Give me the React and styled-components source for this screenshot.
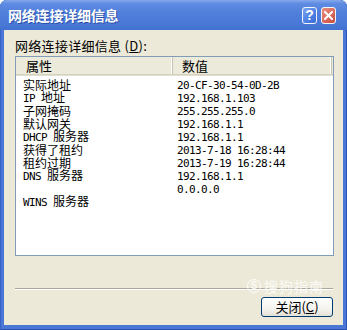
import React from 'react';
import styled, { createGlobalStyle } from 'styled-components';

const GlobalStyle = createGlobalStyle`
  html, body {
    margin: 0;
    padding: 0;
    background: #ffffff;
  }
  body {
    font-family: "Noto Sans CJK SC", "Liberation Sans", sans-serif;
  }
`;

const Window = styled.div`
  position: relative;
  width: 347px;
  height: 330px;
  box-sizing: border-box;
  display: flex;
  flex-direction: column;
  border-radius: 7px 7px 0 0;
  background: #4a76d6;
  padding: 0 4px 5px 4px;
  box-shadow: inset 1px 0 0 #3661c6, inset -1px 0 0 #2c55b8, inset 0 -1px 0 #2a50b0;
  overflow: hidden;
`;

const TitleBar = styled.div`
  height: 30px;
  margin: 0 -4px;
  padding: 0 11px 0 8px;
  display: flex;
  align-items: center;
  border-radius: 7px 7px 0 0;
  background: linear-gradient(
    to bottom,
    #86a9ec 0%,
    #5f8ce2 12%,
    #4f7edb 45%,
    #4a78d7 80%,
    #4270d0 100%
  );
`;

const Title = styled.div`
  flex: 1;
  color: #ffffff;
  font-size: 14px;
  font-weight: 700;
  letter-spacing: -0.2px;
  text-shadow: 1px 1px 0 #2a4fa8;
`;

const Caption = styled.div`
  display: flex;
  gap: 4px;
`;

const CaptionButton = styled.div`
  width: 15px;
  height: 17px;
  box-sizing: border-box;
  border: 1px solid #f4f6fc;
  border-radius: 3px;
  display: flex;
  align-items: center;
  justify-content: center;
  color: #ffffff;
  font-family: "Liberation Sans", sans-serif;
  font-weight: 700;
  font-size: 14px;
  background: ${(p) =>
    p.$close
      ? 'linear-gradient(135deg, #e99080 0%, #d9685a 55%, #c8503f 100%)'
      : 'linear-gradient(135deg, #7ea6f0 0%, #4f82e3 55%, #3a6bd8 100%)'};
`;

const Client = styled.div`
  flex: 1;
  background: #ece9d8;
  display: flex;
  flex-direction: column;
  padding: 9px 9px 8px 11px;
`;

const Label = styled.div`
  font-size: 13px;
  line-height: 14px;
  color: #000;
  margin-bottom: 3px;
  letter-spacing: 0.3px;

  & u {
    text-decoration: underline;
  }
`;

const ListBox = styled.div`
  height: 200px;
  box-sizing: border-box;
  border: 1px solid #7f9db9;
  background: #ffffff;
  display: flex;
  flex-direction: column;
`;

const Header = styled.div`
  display: flex;
  height: 17px;
  background: #ebeadb;
  border-bottom: 1px solid #d6d2c2;
  box-shadow: 0 1px 0 #e2decd;
`;

const HeaderCell = styled.div`
  width: ${(p) => p.$w}px;
  box-sizing: border-box;
  padding-left: ${(p) => p.$pad}px;
  font-size: 13px;
  line-height: 17px;
  color: #000;
  border-right: 1px solid #c7c5b2;
  box-shadow: inset -1px 0 0 #ffffff;
`;

const Rows = styled.div`
  padding-top: 3px;
  display: flex;
  flex-direction: column;
`;

const Row = styled.div`
  display: flex;
  height: 13px;
  align-items: center;
`;

const Cell = styled.div`
  width: ${(p) => p.$w}px;
  box-sizing: border-box;
  padding-left: ${(p) => p.$pad}px;
  font-size: 12px;
  line-height: 13px;
  color: #000;
  white-space: nowrap;
`;

const Latin = styled.span`
  font-family: "DejaVu Sans Mono", "Liberation Mono", monospace;
  font-size: 11px;
  letter-spacing: -0.62px;
  white-space: pre;
`;

const Spacer = styled.div`
  flex: 1;
`;

const Separator = styled.div`
  height: 1px;
  margin-right: 1px;
  background: #aca899;
  border-bottom: 1px solid #ffffff;
`;

const Footer = styled.div`
  display: flex;
  justify-content: flex-end;
  padding-top: 7px;
  padding-right: 1px;
`;

const Button = styled.button`
  position: relative;
  z-index: 1;
  width: 72px;
  height: 20px;
  padding: 0;
  border: 1px solid #003c74;
  border-radius: 3px;
  background: linear-gradient(to bottom, #ffffff 0%, #f4f3ee 60%, #e3e1d6 100%);
  font-family: "Noto Sans CJK SC", sans-serif;
  font-size: 13px;
  line-height: 18px;
  color: #000;
`;

const Watermark = styled.div`
  position: absolute;
  left: 247px;
  top: 278px;
  display: flex;
  align-items: center;
  gap: 3px;
  color: rgba(255, 255, 255, 0.8);
  font-size: 14px;
  line-height: 16px;
  letter-spacing: 1px;
  pointer-events: none;
`;

const Badge = styled.span`
  width: 14px;
  height: 14px;
  box-sizing: border-box;
  border-radius: 50%;
  border: 1.5px solid rgba(255, 255, 255, 0.85);
  display: flex;
  align-items: center;
  justify-content: center;
  font-family: "Liberation Sans", sans-serif;
  font-weight: 700;
  font-size: 10px;
  letter-spacing: 0;
`;

const rows = [
  ['实际地址', '20-CF-30-54-0D-2B'],
  ['IP 地址', '192.168.1.103'],
  ['子网掩码', '255.255.255.0'],
  ['默认网关', '192.168.1.1'],
  ['DHCP 服务器', '192.168.1.1'],
  ['获得了租约', '2013-7-18 16:28:44'],
  ['租约过期', '2013-7-19 16:28:44'],
  ['DNS 服务器', '192.168.1.1'],
  ['', '0.0.0.0'],
  ['WINS 服务器', ''],
];

// ascii runs get the narrow half-width font, CJK stays full width
const mixed = (text) =>
  text.split(/([\x20-\x7e]+)/).filter(Boolean).map((part, i) =>
    /^[\x20-\x7e]+$/.test(part) ? <Latin key={i}>{part}</Latin> : <span key={i}>{part}</span>
  );

export default function App() {
  return (
    <>
      <GlobalStyle />
      <Window>
        <TitleBar>
          <Title>网络连接详细信息</Title>
          <Caption>
            <CaptionButton>?</CaptionButton>
            <CaptionButton $close>
              <svg width="9" height="9" viewBox="0 0 9 9">
                <path d="M1 1 L8 8 M8 1 L1 8" stroke="#fff" strokeWidth="2" strokeLinecap="square" />
              </svg>
            </CaptionButton>
          </Caption>
        </TitleBar>
        <Client>
          <Label>
            网络连接详细信息 (<u>D</u>):
          </Label>
          <ListBox>
            <Header>
              <HeaderCell $w={157} $pad={10}>属性</HeaderCell>
              <HeaderCell $w={159} $pad={9}>数值</HeaderCell>
            </Header>
            <Rows>
              {rows.map(([name, value], i) => (
                <Row key={i}>
                  <Cell $w={158} $pad={7}>{mixed(name)}</Cell>
                  <Cell $w={158} $pad={3}>{mixed(value)}</Cell>
                </Row>
              ))}
            </Rows>
          </ListBox>
          <Spacer />
          <Separator />
          <Footer>
            <Button>
              关闭(<u>C</u>)
            </Button>
          </Footer>
        </Client>
        <Watermark>
          <Badge>S</Badge>
          搜狗指南
        </Watermark>
      </Window>
    </>
  );
}
